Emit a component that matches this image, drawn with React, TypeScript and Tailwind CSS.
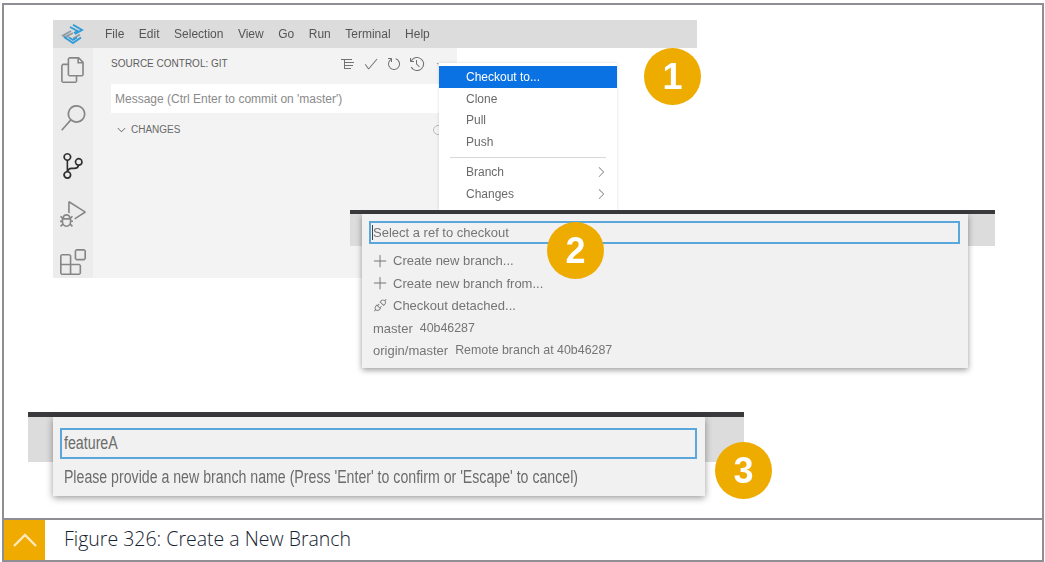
import React from 'react';
import {
  VscAdd,
  VscCheck,
  VscChevronDown,
  VscChevronRight,
  VscDebugAlt,
  VscDebugDisconnect,
  VscExtensions,
  VscFiles,
  VscHistory,
  VscListTree,
  VscRefresh,
  VscSearch,
  VscSourceControl,
} from 'react-icons/vsc';

const SANS = "font-['Liberation_Sans',Arial,sans-serif]";

function Logo() {
  return (
    <svg width="24" height="20" viewBox="0 0 24 20" fill="none" strokeWidth="1.9">
      <path d="M12 0.8 L21 6 L14 10" stroke="#2f9bd8" />
      <path d="M9 3 L16.5 7 L13 9" stroke="#2f9bd8" />
      <path d="M10 7 L2 11.5 L6 14" stroke="#8f9ba3" />
      <path d="M12 9 L6 12 L8 13" stroke="#8f9ba3" />
      <path d="M19 10.5 L12 14.5" stroke="#8f9ba3" />
      <path d="M3 13 L12 19 L20 13.5" stroke="#2f9bd8" />
      <path d="M8 13.5 L12 16 L16 13.5" stroke="#2f9bd8" />
    </svg>
  );
}

function Badge({ n, className }: { n: string; className: string }) {
  return (
    <div
      className={`absolute z-30 w-[57px] h-[57px] rounded-full bg-[#eeab00] flex items-center justify-center text-white font-bold text-[36px] leading-none ${className}`}
    >
      {n}
    </div>
  );
}

function MenuRow({ label, sub, active }: { label: string; sub?: boolean; active?: boolean }) {
  return (
    <div
      className={`h-[21.8px] flex items-center justify-between pl-[27px] pr-[8px] ${
        active ? 'bg-[#0a72e2] text-white font-medium' : 'text-[#6a6a6a]'
      }`}
    >
      <span>{label}</span>
      {sub && <VscChevronRight className="text-[#8a8a8a]" size={16} />}
    </div>
  );
}

function IdeWindow() {
  const menu = ['File', 'Edit', 'Selection', 'View', 'Go', 'Run', 'Terminal', 'Help'];
  return (
    <div className={`absolute left-[49px] top-[15px] w-[644px] h-[258px] flex flex-col text-[12px] blur-[0.35px] ${SANS}`}>
      {/* Title bar */}
      <div className="h-[28px] bg-[#dcdcdc] flex items-center text-[#555] shrink-0">
        <div className="w-[52px] pl-[8px] flex items-center">
          <Logo />
        </div>
        <div className="flex gap-[14.5px]">
          {menu.map((m) => (
            <span key={m}>{m}</span>
          ))}
        </div>
      </div>

      <div className="flex flex-1">
        {/* Activity bar */}
        <div className="w-[40px] bg-[#ececec] flex flex-col items-center pt-[9px] gap-[22px] text-[#868686]">
          <VscFiles size={26} />
          <VscSearch size={26} />
          <VscSourceControl size={26} className="text-[#2e2e2e]" />
          <VscDebugAlt size={26} />
          <VscExtensions size={26} />
        </div>

        {/* Side panel */}
        <div className="w-[364px] bg-[#f3f3f3] pl-[18px] pr-[12px]">
          <div className="h-[31px] mb-[5px] flex items-center justify-between text-[10px] text-[#5e5e5e]">
            <span>SOURCE CONTROL: GIT</span>
            <div className="flex items-center gap-[7px] text-[#727272] mr-[1px]">
              <VscListTree size={16} />
              <VscCheck size={16} />
              <VscRefresh size={16} />
              <VscHistory size={16} />
              <span className="w-[8px] ml-[4px] text-[10px] leading-none">··</span>
            </div>
          </div>
          <div className="h-[29px] bg-white flex items-center pl-[4px] text-[#8a8a8a]">
            Message (Ctrl Enter to commit on 'master')
          </div>
          <div className="h-[33px] flex items-center justify-between text-[10px] text-[#6a6a6a] pl-[4px] pr-[2px]">
            <span className="flex items-center gap-[3px]">
              <VscChevronDown size={13} />
              CHANGES
            </span>
            <span className="w-[10px] h-[10px] rounded-full border border-[#bbb]" />
          </div>
        </div>
      </div>
    </div>
  );
}

function ContextMenu() {
  return (
    <div className={`absolute z-10 left-[435px] top-[58px] w-[178px] h-[147px] bg-white pt-[3px] text-[12px] shadow-[0_0_3px_rgba(0,0,0,0.15)] blur-[0.35px] ${SANS}`}>
      <MenuRow label="Checkout to..." active />
      <MenuRow label="Clone" />
      <MenuRow label="Pull" />
      <MenuRow label="Push" />
      <div className="h-px bg-[#d8d8d8] mx-[11px] mt-[4px] mb-[3px]" />
      <MenuRow label="Branch" sub />
      <MenuRow label="Changes" sub />
    </div>
  );
}

function BranchPicker() {
  return (
    <div className={`absolute z-20 left-[346px] top-[205px] w-[645px] blur-[0.35px] ${SANS}`}>
      <div className="h-[4px] bg-[#3a3a3d]" />
      <div className="h-[32px] bg-[#dcdcdc]" />
      <div className="absolute left-[12px] top-[4px] w-[606px] h-[154px] bg-[#f1f1f1] shadow-[0_2px_6px_rgba(0,0,0,0.4)] px-[7px] pt-[7px] text-[13px] text-[#757575]">
        <div className="h-[23px] border-2 border-[#5aa7dc] flex items-center pl-[1px] mr-[1px]">
          <span className="w-px h-[15px] bg-[#444]" />
          Select a ref to checkout
        </div>
        <div className="mt-[6px] pl-[4px] flex flex-col">
          <div className="h-[22.4px] flex items-center gap-[5px]">
            <VscAdd size={15} />
            Create new branch...
          </div>
          <div className="h-[22.4px] flex items-center gap-[5px]">
            <VscAdd size={15} />
            Create new branch from...
          </div>
          <div className="h-[22.4px] flex items-center gap-[5px]">
            <VscDebugDisconnect size={15} />
            Checkout detached...
          </div>
          <div className="h-[22.4px] flex items-center gap-[7px]">
            <span>master</span>
            <span className="text-[12.4px]">40b46287</span>
          </div>
          <div className="h-[22.4px] flex items-center gap-[7px]">
            <span>origin/master</span>
            <span className="text-[12.4px]">Remote branch at 40b46287</span>
          </div>
        </div>
      </div>
    </div>
  );
}

function BranchNameInput() {
  return (
    <div className={`absolute z-20 left-[24px] top-[407px] w-[716px] blur-[0.35px] ${SANS}`}>
      <div className="h-[5px] bg-[#3a3a3d]" />
      <div className="h-[45px] bg-[#dcdcdc]" />
      <div className="absolute left-[25px] top-[5px] w-[652px] h-[79px] bg-[#f1f1f1] shadow-[0_2px_7px_rgba(0,0,0,0.4)] pl-[7px] pr-[8px] pt-[11px] text-[#6c6c6c] text-[18px]">
        {/* the source picture squeezes this text horizontally */}
        <div className="h-[31px] border-2 border-[#5aa7dc] flex items-center pl-[2px]">
          <span className="scale-x-[0.79] origin-left">featureA</span>
        </div>
        <div className="mt-[8px] pl-[5px] whitespace-nowrap leading-[20px] scale-x-[0.786] origin-left">
          Please provide a new branch name (Press 'Enter' to confirm or 'Escape' to cancel)
        </div>
      </div>
    </div>
  );
}

export default function App() {
  return (
    <div className="w-[1045px] h-[562px] bg-white pl-[2px] pr-[1px] pt-[3px]">
      <div className="h-[559px] border-2 border-[#8e8e93] flex flex-col">
        {/* Figure canvas: overlapping screenshots */}
        <div className={`relative flex-1 overflow-hidden ${SANS}`}>
          <IdeWindow />
          <ContextMenu />
          <BranchPicker />
          <BranchNameInput />
          <Badge n="1" className="left-[640px] top-[43px]" />
          <Badge n="2" className="left-[543px] top-[217px]" />
          <Badge n="3" className="left-[711px] top-[437px]" />
        </div>

        {/* Caption */}
        <div className="h-[42px] border-t-2 border-[#8e8e93] flex items-center shrink-0">
          <div className="w-[41px] h-full bg-[#f0ab00] flex items-center justify-center">
            <svg width="26" height="14" viewBox="0 0 26 14" fill="none">
              <path d="M2 13 L13 2 L24 13" stroke="#fce8bd" strokeWidth="2.4" />
            </svg>
          </div>
          <span className="ml-[19px] mb-[3px] text-[19.5px] font-light text-[#14222f] font-['Open_Sans',sans-serif]">
            Figure 326: Create a New Branch
          </span>
        </div>
      </div>
    </div>
  );
}
